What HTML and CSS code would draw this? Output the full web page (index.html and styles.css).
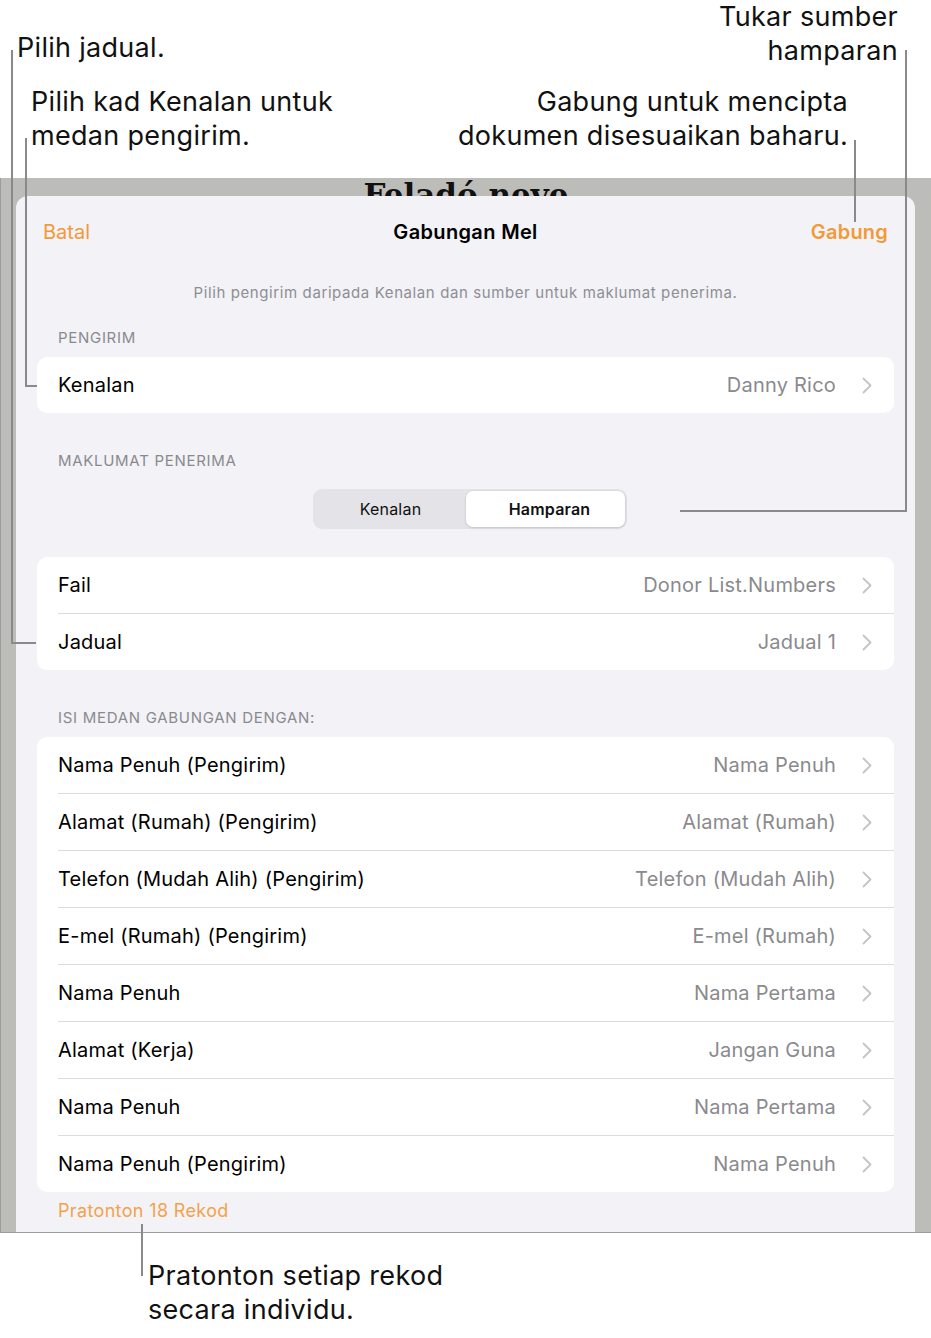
FILE: index.html
```html
<!DOCTYPE html>
<html lang="ms">
<head>
    <meta charset="UTF-8">
    <meta name="viewport" content="width=device-width, initial-scale=1.0">
    <title>Gabungan Mel</title>
    <link rel="stylesheet" href="styles.css">
</head>
<body>
    <div class="figure">
        <div class="notes-top">
            <div class="notes-col">
                <p class="note note-table">Pilih jadual.</p>
                <p class="note note-sender">Pilih kad Kenalan untuk<br>medan pengirim.</p>
            </div>
            <div class="notes-col notes-right">
                <p class="note note-source">Tukar sumber<br>hamparan</p>
                <p class="note note-merge">Gabung untuk mencipta<br>dokumen disesuaikan baharu.</p>
            </div>
        </div>

        <div class="shot">
            <div class="ghost-title">Feladó neve</div>
            <div class="sheet">
                <div class="nav">
                    <span class="nav-btn">Batal</span>
                    <span class="nav-title">Gabungan Mel</span>
                    <span class="nav-btn nav-done">Gabung</span>
                </div>

                <p class="intro">Pilih pengirim daripada Kenalan dan sumber untuk maklumat penerima.</p>

                <h2 class="section-head first">PENGIRIM</h2>
                <div class="card">
                    <div class="row"><span class="label">Kenalan</span><span class="value">Danny Rico</span><span class="chev"></span></div>
                </div>

                <h2 class="section-head">MAKLUMAT PENERIMA</h2>
                <div class="segmented">
                    <span class="seg">Kenalan</span>
                    <span class="seg active">Hamparan</span>
                </div>

                <div class="card card-source">
                    <div class="row"><span class="label">Fail</span><span class="value">Donor List.Numbers</span><span class="chev"></span></div>
                    <div class="row"><span class="label">Jadual</span><span class="value">Jadual 1</span><span class="chev"></span></div>
                </div>

                <h2 class="section-head">ISI MEDAN GABUNGAN DENGAN:</h2>
                <div class="card">
                    <div class="row"><span class="label">Nama Penuh (Pengirim)</span><span class="value">Nama Penuh</span><span class="chev"></span></div>
                    <div class="row"><span class="label">Alamat (Rumah) (Pengirim)</span><span class="value">Alamat (Rumah)</span><span class="chev"></span></div>
                    <div class="row"><span class="label">Telefon (Mudah Alih) (Pengirim)</span><span class="value">Telefon (Mudah Alih)</span><span class="chev"></span></div>
                    <div class="row"><span class="label">E-mel (Rumah) (Pengirim)</span><span class="value">E-mel (Rumah)</span><span class="chev"></span></div>
                    <div class="row"><span class="label">Nama Penuh</span><span class="value">Nama Pertama</span><span class="chev"></span></div>
                    <div class="row"><span class="label">Alamat (Kerja)</span><span class="value">Jangan Guna</span><span class="chev"></span></div>
                    <div class="row"><span class="label">Nama Penuh</span><span class="value">Nama Pertama</span><span class="chev"></span></div>
                    <div class="row"><span class="label">Nama Penuh (Pengirim)</span><span class="value">Nama Penuh</span><span class="chev"></span></div>
                </div>

                <p class="preview-link">Pratonton 18 Rekod</p>
            </div>
        </div>

        <p class="note note-preview">Pratonton setiap rekod<br>secara individu.</p>

        <!-- leader lines from each note to its control -->
        <svg class="leaders" width="931" height="1338" viewBox="0 0 931 1338">
            <polyline points="12,50 12,643 36,643"/>
            <polyline points="26,138 26,386 37,386"/>
            <polyline points="906,50 906,511 680,511"/>
            <polyline points="855,140 855,222"/>
            <polyline points="142,1224 142,1276"/>
        </svg>
    </div>
</body>
</html>
```

FILE: styles.css
```css
* {
    box-sizing: border-box;
}

body {
    margin: 0;
    background: #ffffff;
    font-family: 'Inter', 'Noto Sans', sans-serif;
    color: #000000;
}

p, h2 {
    margin: 0;
}

.figure {
    position: relative;
    width: 931px;
    height: 1338px;
    overflow: hidden;
}

/* callout notes */

.note {
    font-size: 27px;
    line-height: 34px;
    letter-spacing: 0.3px;
    color: #111111;
}

.notes-top {
    display: flex;
    justify-content: space-between;
    height: 178px;
}

.notes-right {
    text-align: right;
}

.note-table {
    margin: 31px 0 0 17px;
}

.note-sender {
    margin: 20px 0 0 31px;
}

.note-source {
    margin: 0 33px 0 0;
}

.note-merge {
    margin: 17px 83px 0 0;
}

.note-preview {
    margin: 26px 0 0 148px;
}

.leaders {
    position: absolute;
    top: 0;
    left: 0;
    pointer-events: none;
}

.leaders polyline {
    fill: none;
    stroke: #8a8a8a;
    stroke-width: 2;
}

/* screenshot frame */

.shot {
    height: 1055px;
    background: #bcbdb8;
    border-left: 1px solid #9c9d9a;
    border-bottom: 1px solid #9c9d9a;
    overflow: hidden;
}

.ghost-title {
    height: 18px;
    padding-top: 2px;
    font-family: 'DejaVu Serif', serif;
    font-weight: bold;
    font-size: 31px;
    line-height: 30px;
    text-align: center;
    color: #111111;
}

.sheet {
    position: relative;
    margin: 0 16px 0 15px;
    height: 1037px;
    padding: 0 21px;
    background: #f2f2f7;
    border-radius: 12px 12px 0 0;
}

.nav {
    display: grid;
    grid-template-columns: 1fr auto 1fr;
    align-items: center;
    height: 72px;
    padding: 0 6px;
    font-size: 20px;
}

.nav-btn {
    color: #f29a38;
}

.nav-title {
    font-weight: 600;
    letter-spacing: 0.35px;
}

.nav-done {
    text-align: right;
    font-weight: 600;
    letter-spacing: 0.2px;
}

.intro {
    margin-top: 15px;
    font-size: 15px;
    line-height: 20px;
    letter-spacing: 0.6px;
    text-align: center;
    color: #8e8e93;
}

.section-head {
    margin: 38px 0 9px 21px;
    font-size: 15px;
    line-height: 20px;
    font-weight: 400;
    letter-spacing: 0.7px;
    color: #8a8a8e;
}

.section-head.first {
    margin-top: 25px;
}

.card {
    background: #ffffff;
    border-radius: 10px;
    padding-left: 21px;
}

.row {
    display: flex;
    align-items: center;
    height: 56px;
    padding-right: 22px;
    font-size: 20px;
    letter-spacing: 0.22px;
}

.row + .row {
    height: 57px;
    border-top: 1px solid #dcdce0;
}

.label {
    flex: 1;
}

.value {
    color: #8a8a8e;
}

.chev {
    width: 10px;
    height: 17px;
    margin-left: 26px;
    background: no-repeat center / 10px 17px;
    background-image: url("data:image/svg+xml,%3Csvg xmlns='http://www.w3.org/2000/svg' width='10' height='17' viewBox='0 0 10 17'%3E%3Cpath d='M1.5 1.5 L8.5 8.5 L1.5 15.5' fill='none' stroke='%23c4c4c8' stroke-width='1.8' stroke-linecap='round' stroke-linejoin='round'/%3E%3C/svg%3E");
}

.segmented {
    display: flex;
    width: 314px;
    height: 40px;
    margin: 18px 0 28px 276px;
    padding: 2px;
    background: #e3e3e8;
    border-radius: 9px;
}

.seg {
    display: flex;
    align-items: center;
    justify-content: center;
    width: 151px;
    font-size: 16px;
    letter-spacing: 0.2px;
    color: #111111;
}

.seg.active {
    width: 159px;
    padding-left: 8px;
    background: #ffffff;
    border-radius: 7px;
    font-weight: 600;
    box-shadow: 0 1px 3px rgba(0, 0, 0, 0.12), 0 0 0 0.5px rgba(0, 0, 0, 0.04);
}

.preview-link {
    margin: 8px 0 0 21px;
    font-size: 18px;
    line-height: 22px;
    letter-spacing: 0.35px;
    color: #f4a24a;
}
```
